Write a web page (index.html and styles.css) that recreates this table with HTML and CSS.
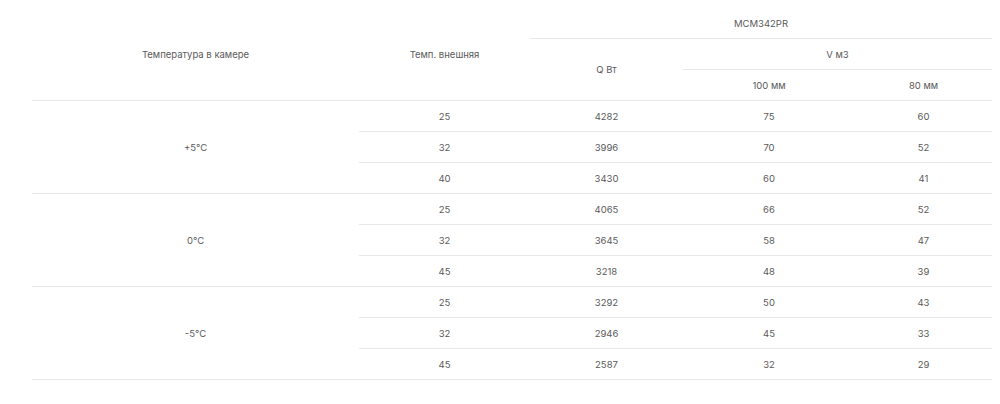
FILE: index.html
```html
<!DOCTYPE html>
<html lang="ru">
<head>
<meta charset="utf-8">
<link rel="stylesheet" href="styles.css">
</head>
<body>
<div class="wrap">
<table class="spec">
  <colgroup>
    <col class="c1"><col class="c2"><col class="c3"><col class="c4"><col class="c5">
  </colgroup>
  <thead>
    <tr>
      <th rowspan="3">Температура в камере</th>
      <th rowspan="3">Темп. внешняя</th>
      <th colspan="3" class="bb">MCM342PR</th>
    </tr>
    <tr>
      <th rowspan="2">Q Вт</th>
      <th colspan="2" class="bb">V м3</th>
    </tr>
    <tr>
      <th>100 мм</th>
      <th>80 мм</th>
    </tr>
  </thead>
  <tbody>
    <tr><td rowspan="3">+5°C</td><td>25</td><td>4282</td><td>75</td><td>60</td></tr>
    <tr><td>32</td><td>3996</td><td>70</td><td>52</td></tr>
    <tr><td>40</td><td>3430</td><td>60</td><td>41</td></tr>
    <tr><td rowspan="3">0°C</td><td>25</td><td>4065</td><td>66</td><td>52</td></tr>
    <tr><td>32</td><td>3645</td><td>58</td><td>47</td></tr>
    <tr><td>45</td><td>3218</td><td>48</td><td>39</td></tr>
    <tr><td rowspan="3">-5°C</td><td>25</td><td>3292</td><td>50</td><td>43</td></tr>
    <tr><td>32</td><td>2946</td><td>45</td><td>33</td></tr>
    <tr><td>45</td><td>2587</td><td>32</td><td>29</td></tr>
  </tbody>
</table>
</div>
</body>
</html>
```

FILE: styles.css
```css
html, body {
  margin: 0;
  padding: 0;
  background: #fff;
}
.wrap {
  padding: 8px 8px 0 32px;
}
.spec {
  width: 960px;
  border-collapse: collapse;
  table-layout: fixed;
  font-family: Inter, "Liberation Sans", sans-serif;
  font-size: 9.5px;
  color: #5a5a5a;
}
.c1 { width: 327px; }
.c2 { width: 171px; }
.c3 { width: 153px; }
.c4 { width: 172px; }
.c5 { width: 137px; }
.spec th, .spec td {
  height: 30px;
  padding: 0;
  text-align: center;
  vertical-align: middle;
  font-weight: 400;
  border-bottom: 1px solid #e8e8e8;
}
.spec thead th {
  border-bottom: none;
}
.spec thead th.bb {
  border-bottom: 1px solid #e8e8e8;
}
.spec thead tr:last-child th,
.spec thead th[rowspan="3"],
.spec thead th[rowspan="2"] {
  border-bottom: 1px solid #e8e8e8;
}
```
